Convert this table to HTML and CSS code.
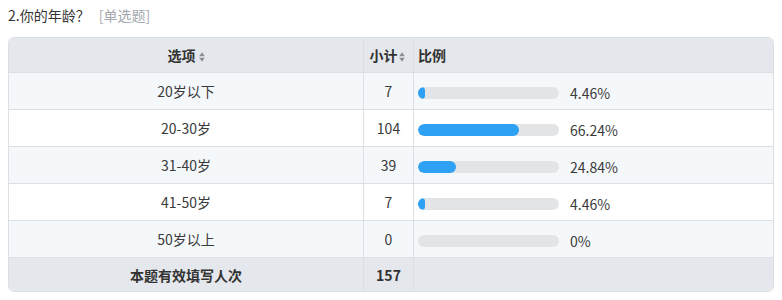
FILE: index.html
```html
<!DOCTYPE html>
<html lang="zh-CN">
<head>
<meta charset="utf-8">
<title>2.你的年龄？</title>
<link rel="stylesheet" href="styles.css">
</head>
<body>
<div class="q-title">2.你的年龄？<span class="q-type">[单选题]</span></div>
<table class="stat">
  <colgroup>
    <col class="c-opt">
    <col class="c-cnt">
    <col class="c-pct">
  </colgroup>
  <thead>
    <tr>
      <th class="center">选项<svg class="sort" width="6" height="10" viewBox="0 0 6 10"><path d="M3 0.3 L5.8 4.2 H0.2 Z M3 9.7 L5.8 5.8 H0.2 Z" fill="#8a8e94"/></svg></th>
      <th class="center">小计<svg class="sort tight" width="6" height="10" viewBox="0 0 6 10"><path d="M3 0.3 L5.8 4.2 H0.2 Z M3 9.7 L5.8 5.8 H0.2 Z" fill="#8a8e94"/></svg></th>
      <th class="left">比例</th>
    </tr>
  </thead>
  <tbody>
    <tr class="alt">
      <td class="center">20岁以下</td><td class="center">7</td>
      <td><div class="pct"><div class="track"><div class="fill" style="width:7px"></div></div><span>4.46%</span></div></td>
    </tr>
    <tr>
      <td class="center">20-30岁</td><td class="center">104</td>
      <td><div class="pct"><div class="track"><div class="fill" style="width:101px"></div></div><span>66.24%</span></div></td>
    </tr>
    <tr class="alt">
      <td class="center">31-40岁</td><td class="center">39</td>
      <td><div class="pct"><div class="track"><div class="fill" style="width:38px"></div></div><span>24.84%</span></div></td>
    </tr>
    <tr>
      <td class="center">41-50岁</td><td class="center">7</td>
      <td><div class="pct"><div class="track"><div class="fill" style="width:7px"></div></div><span>4.46%</span></div></td>
    </tr>
    <tr class="alt">
      <td class="center">50岁以上</td><td class="center">0</td>
      <td><div class="pct"><div class="track"></div><span>0%</span></div></td>
    </tr>
  </tbody>
  <tfoot>
    <tr>
      <td class="center">本题有效填写人次</td><td class="center">157</td><td></td>
    </tr>
  </tfoot>
</table>
</body>
</html>
```
FILE: styles.css
```css
html, body {
  margin: 0;
  padding: 0;
  background: #ffffff;
}
body {
  padding: 0 8px;
  font-family: "Noto Sans CJK SC", "Noto Sans", sans-serif;
  color: #3a3a3a;
}
.q-title {
  padding-top: 5px;
  height: 20px;
  line-height: 20px;
  font-size: 14px;
  color: #333;
  margin-bottom: 12px;
}
.q-type {
  color: #a3a8ae;
  margin-left: 9px;
}
.stat {
  width: 100%;
  table-layout: fixed;
  border-collapse: separate;
  border-spacing: 0;
  border: 1px solid #dcdfe3;
  border-radius: 6px;
  overflow: hidden;
  font-size: 14px;
}
.c-opt { width: 355px; }
.c-cnt { width: 50px; }
.stat th, .stat td {
  padding: 0 0 0 4px;
  border-bottom: 1px solid #dcdfe3;
  border-right: 1px solid #dcdfe3;
  vertical-align: middle;
}
.stat th:last-child, .stat td:last-child { border-right: none; }
.stat th.center, .stat td.center { text-align: center; padding-left: 0; }
.stat th.left { text-align: left; }
.stat thead th {
  height: 34px;
  background: #e4e7eb;
  font-weight: bold;
  color: #333;
}
.stat thead th:nth-child(2) { padding-right: 3px; }
.stat tbody td {
  height: 36px;
  background: #ffffff;
}
.stat tbody tr.alt td { background: #f5f8fb; }
.stat tfoot td {
  height: 33px;
  background: #e4e7eb;
  font-weight: bold;
  border-bottom: none;
  color: #333;
}
.sort {
  display: inline-block;
  vertical-align: -1px;
  margin-left: 3px;
}
.sort.tight { margin-left: 1px; }
.pct {
  display: flex;
  align-items: center;
}
.track {
  width: 141px;
  height: 12px;
  border-radius: 6px;
  background: #e3e4e6;
  overflow: hidden;
  margin-right: 11px;
  margin-top: 3px;
}
.fill {
  height: 100%;
  background: #2ea1f4;
  border-radius: 6px;
}
.pct span { margin-top: 4px; }
```
